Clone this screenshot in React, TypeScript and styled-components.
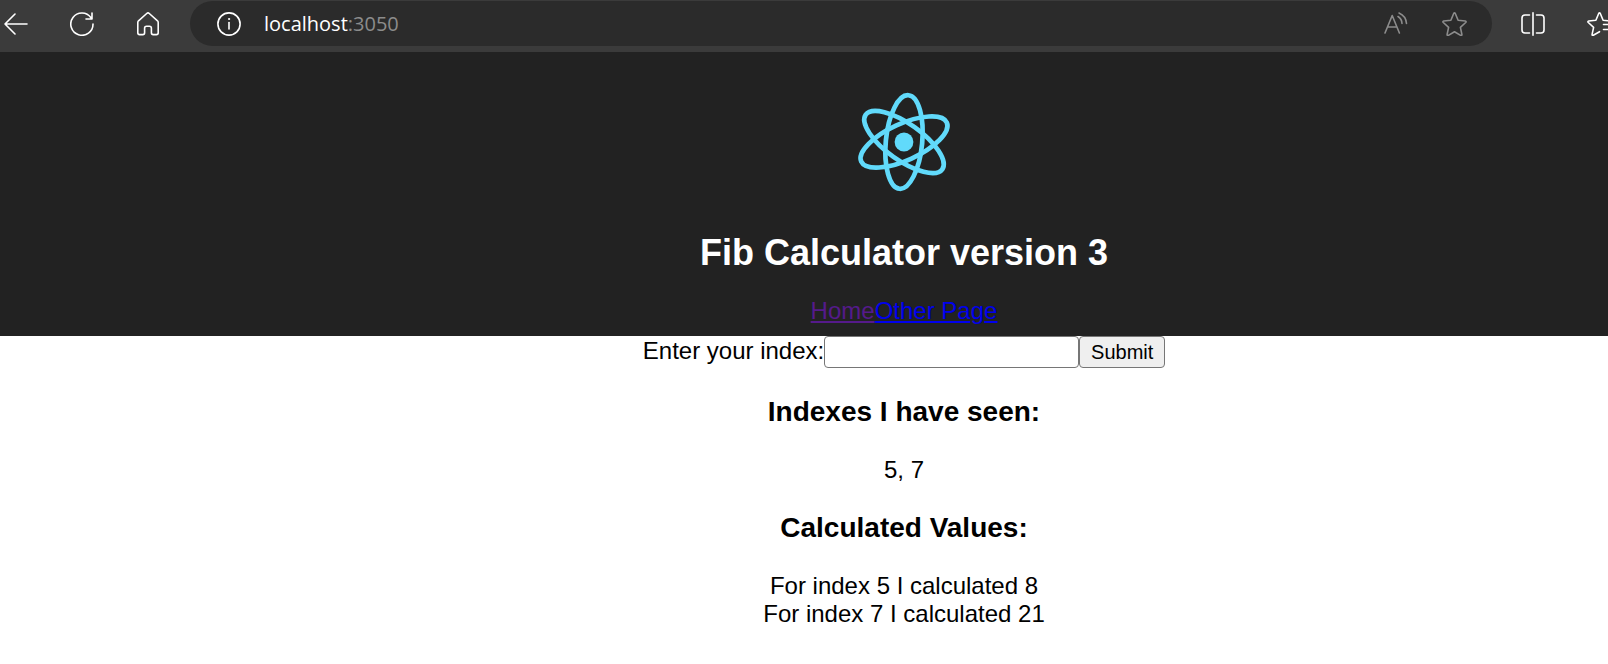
import React, { useState } from "react";
import styled, { createGlobalStyle } from "styled-components";

const GlobalStyle = createGlobalStyle`
  body {
    margin: 0;
    background: #fff;
    color: #000;
    font-family: "Liberation Sans", Arial, sans-serif;
    font-size: 24px;
    line-height: 28px;
  }
`;

const Toolbar = styled.nav`
  display: flex;
  align-items: center;
  height: 45px;
  padding: 1px 0 6px 4px;
  background: #3b3b3b;
`;

const ToolButton = styled.button<{ $gap?: number; $dim?: boolean }>`
  display: flex;
  flex: none;
  margin: 0 ${(p) => p.$gap ?? 0}px 0 0;
  padding: 0;
  border: 0;
  background: none;
  color: ${(p) => (p.$dim ? "#8c8c8c" : "#fff")};
`;

const Icon = styled.svg`
  display: block;
  fill: none;
  stroke: currentColor;
  stroke-width: 1.6;
  stroke-linecap: round;
  stroke-linejoin: round;
`;

const AddressBar = styled.div`
  display: flex;
  flex: 1;
  align-items: center;
  height: 45px;
  margin-right: 29px;
  padding: 0 25px 0 27px;
  border-radius: 23px;
  box-sizing: border-box;
  background: #2b2b2b;
`;

const Address = styled.span`
  flex: 1;
  margin-left: 23px;
  color: #8c8c8c;
  font-family: "Open Sans", "Segoe UI", sans-serif;
  font-size: 20px;
`;

const Host = styled.span`
  color: #fff;
`;

const Page = styled.div`
  text-align: center;
`;

const Header = styled.header`
  padding: 30px 0 11px 200px;
  background: #222;
  color: #fff;
`;

const Content = styled.main`
  padding-left: 200px;
`;

const Logo = styled.svg`
  display: block;
  height: 120px;
  margin: 0 auto;
`;

const Title = styled.h1`
  margin: 30px 0 24px;
  font-size: 36px;
  line-height: 41px;
`;

const PageLink = styled.a<{ $visited?: boolean }>`
  color: ${(p) => (p.$visited ? "#551a8b" : "#0000ee")};
`;

const Form = styled.form`
  display: flex;
  align-items: baseline;
  justify-content: center;
`;

const IndexInput = styled.input`
  width: 255px;
  height: 32px;
  margin: 0;
  padding: 2px 4px;
  border: 1px solid #767676;
  border-radius: 4px;
  box-sizing: border-box;
  font: 20px "Liberation Sans", Arial, sans-serif;
`;

const Submit = styled.button`
  width: 86px;
  height: 32px;
  padding: 0;
  border: 1px solid #767676;
  border-radius: 4px;
  background: #efefef;
  color: #000;
  font: 20px "Liberation Sans", Arial, sans-serif;
`;

const SectionTitle = styled.h3`
  margin: 28px 0;
  font-size: 28px;
  line-height: 32px;
`;

const calculated = [
  { index: 5, value: 8 },
  { index: 7, value: 21 },
];

export default function App() {
  const [index, setIndex] = useState("");
  return (
    <>
      <GlobalStyle />
      <Toolbar>
        <ToolButton $gap={42} aria-label="Back">
          <Icon width="24" height="24" viewBox="0 0 24 24">
            <path d="M23 12H1M11 2L1 12l10 10" />
          </Icon>
        </ToolButton>
        <ToolButton $gap={42} aria-label="Refresh">
          <Icon width="24" height="24" viewBox="0 0 24 24">
            <path d="M23 12A11.100 11.100 0 1 1 21 5.800M22 1v6h-6" />
          </Icon>
        </ToolButton>
        <ToolButton $gap={30} aria-label="Home">
          <Icon width="24" height="24" viewBox="0 0 24 24">
            <path d="M10.7 1.5a2 2 0 0 1 2.6 0l8.2 7.3q.7.7.7 1.6v10.4a1.8 1.8 0 0 1-1.8 1.8h-3.2a1.8 1.8 0 0 1-1.8-1.8v-4.6a2 2 0 0 0-2-2h-2.8a2 2 0 0 0-2 2v4.6a1.8 1.8 0 0 1-1.8 1.8H3.6a1.8 1.8 0 0 1-1.8-1.8V10.4q0-.9.7-1.6z" />
          </Icon>
        </ToolButton>
        <AddressBar>
          <ToolButton aria-label="Site information">
            <Icon width="24" height="24" viewBox="0 0 24 24">
              <circle cx="12" cy="12" r="11.1" />
              <path d="M12 10.5v6.500" />
              <circle cx="12" cy="7" r=".6" fill="currentColor" strokeWidth="1" />
            </Icon>
          </ToolButton>
          <Address>
            <Host>localhost</Host>:3050
          </Address>
          <ToolButton $gap={34} $dim aria-label="Read aloud">
            <Icon width="24" height="24" viewBox="0 0 24 24">
              <path d="M1 21L8.200 3.500l7.200 17.500M3.500 15h9.400M14 4.500a8.500 8.500 0 0 1 4 7M15 1a12.500 12.500 0 0 1 7.500 10.500" />
            </Icon>
          </ToolButton>
          <ToolButton $dim aria-label="Add to favorites">
            <Icon width="25" height="24" viewBox="0 0 25 24">
              <path d="M11.700 1.500q.8-1.200 1.600 0l2.800 6.700 7.200.8q1.300.4.4 1.500l-5.300 4.900 1.500 7.100q0 1.300-1.200.9l-6.200-3.600-6.200 3.600q-1.200.4-1.200-.9l1.500-7.100L1.300 10.500Q.4 9.400 1.700 9l7.200-.8z" />
            </Icon>
          </ToolButton>
        </AddressBar>
        <ToolButton $gap={42} aria-label="Split screen">
          <Icon width="24" height="24" viewBox="0 0 24 24">
            <path d="M8.500 3H4a3 3 0 0 0-3 3v12a3 3 0 0 0 3 3h4.500M15.500 3H20a3 3 0 0 1 3 3v12a3 3 0 0 1-3 3h-4.500M12 .8v22.400" />
          </Icon>
        </ToolButton>
        <ToolButton aria-label="Favorites">
          <Icon width="21" height="24" viewBox="0 0 21 24">
            <path d="M12.500 19.700l-6.200 3.600q-1.200.4-1.200-.9l1.500-7.100L1.300 10.500Q.4 9.400 1.700 9l7.200-.8 2.800-6.700q.8-1.200 1.600 0l2.800 6.700 6 .7M16.500 12.500H24M16.500 17.500H24" />
          </Icon>
        </ToolButton>
      </Toolbar>
      <Page>
        <Header>
          <Logo width="120" height="120" viewBox="-60 -60 120 120" role="img" aria-label="React logo">
            <g fill="none" stroke="#61dafb" strokeWidth="4.7">
              <ellipse rx="47" ry="18.2" transform="rotate(-84.5)" />
              <ellipse rx="47" ry="18.2" transform="rotate(-24.5)" />
              <ellipse rx="47" ry="18.2" transform="rotate(35.5)" />
            </g>
            <circle r="9.4" fill="#61dafb" />
          </Logo>
          <Title>Fib Calculator version 3</Title>
          <PageLink href="#/" $visited>Home</PageLink>
          <PageLink href="#/otherpage">Other Page</PageLink>
        </Header>
        <Content>
          <Form onSubmit={(e) => e.preventDefault()}>
            <label htmlFor="index">Enter your index:</label>
            <IndexInput id="index" value={index} onChange={(e) => setIndex(e.target.value)} />
            <Submit type="submit">Submit</Submit>
          </Form>
          <SectionTitle>Indexes I have seen:</SectionTitle>
          <div>{calculated.map((c) => c.index).join(", ")}</div>
          <SectionTitle>Calculated Values:</SectionTitle>
          {calculated.map((c) => (
            <div key={c.index}>{`For index ${c.index} I calculated ${c.value}`}</div>
          ))}
        </Content>
      </Page>
    </>
  );
}
